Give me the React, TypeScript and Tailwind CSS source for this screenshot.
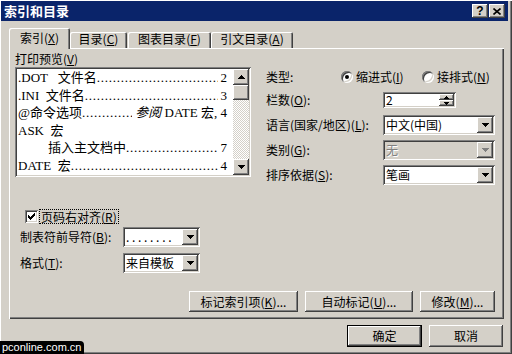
import React from "react";

const raised =
  "shadow-[inset_-1px_-1px_#404040,inset_1px_1px_#ffffff,inset_-2px_-2px_#808080,inset_2px_2px_#d4d0c8]";
const sunken =
  "shadow-[inset_1px_1px_#808080,inset_-1px_-1px_#ffffff,inset_2px_2px_#404040,inset_-2px_-2px_#d4d0c8]";

function M({ c }: { c: string }) {
  return (
    <span>
      (<span className="underline">{c}</span>)
    </span>
  );
}

function DownArrow({ color = "#000000" }: { color?: string }) {
  return (
    <svg width="7" height="4" viewBox="0 0 7 4">
      <path fill={color} d="M0 0h7v1H0zM1 1h5v1H1zM2 2h3v1H2zM3 3h1v1H3z" />
    </svg>
  );
}
function UpArrow() {
  return (
    <svg width="7" height="4" viewBox="0 0 7 4">
      <path fill="#000000" d="M3 0h1v1H3zM2 1h3v1H2zM1 2h5v1H1zM0 3h7v1H0z" />
    </svg>
  );
}
function TinyUp() {
  return (
    <svg width="5" height="3" viewBox="0 0 5 3">
      <path fill="#000000" d="M2 0h1v1H2zM1 1h3v1H1zM0 2h5v1H0z" />
    </svg>
  );
}
function TinyDown() {
  return (
    <svg width="5" height="3" viewBox="0 0 5 3">
      <path fill="#000000" d="M0 0h5v1H0zM1 1h3v1H1zM2 2h1v1H2z" />
    </svg>
  );
}

function Select({ text, w, disabled }: { text: string; w: string; disabled?: boolean }) {
  return (
    <div
      className={`flex h-[20px] items-center p-[2px] ${w} ${sunken} ${
        disabled ? "bg-[#d4d0c8]" : "bg-white"
      }`}
    >
      <span
        className={`flex-1 overflow-hidden whitespace-nowrap pl-[1px] leading-[14px] ${
          disabled ? "text-[#808080] [text-shadow:1px_1px_0_#ffffff]" : ""
        }`}
      >
        {text}
      </span>
      <span className={`flex h-[16px] w-[16px] items-center justify-center bg-[#d4d0c8] ${raised}`}>
        <DownArrow color={disabled ? "#808080" : "#000000"} />
      </span>
    </div>
  );
}

function Radio({ checked }: { checked?: boolean }) {
  return (
    <span className="flex h-[12px] w-[12px] items-center justify-center rounded-full bg-white shadow-[inset_1px_1px_#808080,inset_-1px_-1px_#ffffff,inset_2px_2px_#404040,inset_-2px_-2px_#d4d0c8]">
      {checked && <span className="h-[4px] w-[4px] rounded-full bg-black" />}
    </span>
  );
}

function Btn({ w, children, def }: { w: string; children: React.ReactNode; def?: boolean }) {
  if (def) {
    return (
      <div className={`h-[22px] ${w} border border-black`}>
        <div className={`flex h-full w-full items-center justify-center ${raised}`}>{children}</div>
      </div>
    );
  }
  return (
    <div className={`flex h-[21px] ${w} items-center justify-center ${raised}`}>{children}</div>
  );
}

const DOTS = ".".repeat(60);

function Row({
  left,
  right,
  indent,
}: {
  left: React.ReactNode;
  right?: React.ReactNode;
  indent?: boolean;
}) {
  return (
    <div className={`flex h-[17.6px] whitespace-nowrap ${indent ? "pl-[30px]" : ""}`}>
      <span>{left}</span>
      {right !== undefined && (
        <>
          <span className="min-w-0 flex-1 overflow-hidden tracking-[0.75px]">{DOTS}</span>
          <span className="pl-[3px]">{right}</span>
        </>
      )}
    </div>
  );
}

export default function App() {
  return (
    <div className="relative h-[354px] w-[512px] overflow-hidden bg-[#d4d0c8] font-['Noto_Sans_CJK_SC','Liberation_Sans',sans-serif] text-[12px] leading-[14px] text-black shadow-[inset_1px_1px_#ffffff,inset_-1px_-1px_#404040,inset_-2px_-2px_#808080]">
      {/* Title bar */}
      <div className="ml-px mr-[4px] mt-px flex h-[20px] items-center justify-between bg-[#0a246a] pl-[3px] pr-[3px]">
        <span className="text-[13px] font-bold leading-[16px] text-white">索引和目录</span>
        <div className="flex gap-px">
          <div
            className={`flex h-[14px] w-[16px] items-center justify-center bg-[#d4d0c8] font-['Liberation_Sans',sans-serif] text-[12px] font-bold leading-[12px] ${raised}`}
          >
            ?
          </div>
          <div className={`flex h-[14px] w-[16px] items-center justify-center bg-[#d4d0c8] ${raised}`}>
            <svg width="8" height="7" viewBox="0 0 8 7">
              <path d="M0.5 0.5L7.5 6.5M7.5 0.5L0.5 6.5" stroke="#000000" strokeWidth="1.6" />
            </svg>
          </div>
        </div>
      </div>

      {/* Tabs */}
      <div className="ml-[9px] mt-[7px] flex h-[20px] items-start">
        <div className="relative z-10 flex h-[21px] w-[61px] items-start justify-center rounded-t-[2px] bg-[#d4d0c8] pt-[3px] shadow-[inset_1px_1px_#ffffff,inset_-1px_0_#404040,inset_-2px_0_#808080]">
          索引<M c="X" />
        </div>
        <div className="mt-[4px] flex h-[16px] w-[57px] items-start justify-center rounded-t-[2px] shadow-[inset_1px_1px_#ffffff,inset_-1px_0_#404040,inset_-2px_0_#808080]">
          目录<M c="C" />
        </div>
        <div className="ml-px mt-[4px] flex h-[16px] w-[83px] items-start justify-center rounded-t-[2px] shadow-[inset_1px_1px_#ffffff,inset_-1px_0_#404040,inset_-2px_0_#808080]">
          图表目录<M c="F" />
        </div>
        <div className="mt-[4px] flex h-[16px] w-[82px] items-start justify-center rounded-t-[2px] shadow-[inset_1px_1px_#ffffff,inset_-1px_0_#404040,inset_-2px_0_#808080]">
          引文目录<M c="A" />
        </div>
      </div>

      {/* Panel */}
      <div className="ml-[9px] flex h-[271px] w-[495px] flex-col pt-[3px] shadow-[inset_1px_1px_#ffffff,inset_-1px_-1px_#404040,inset_-2px_-2px_#808080]">
        <div className="ml-[6px] flex h-[134px]">
          {/* Left column */}
          <div className="flex w-[236px] flex-col">
            <div className="h-[16px] leading-[16px]">
              打印预览<M c="V" />
            </div>
            <div className={`flex h-[110px] w-[236px] bg-white p-[2px] ${sunken}`}>
              <div className="min-w-0 flex-1 overflow-hidden pl-[1px] pr-[6px] font-['Liberation_Serif','Noto_Sans_CJK_SC',serif] text-[13px] leading-[17.6px]">
                <Row left={".DOT\u2002 文件名"} right="2" />
                <Row left={".INI\u2002文件名"} right="3" />
                <Row
                  left="@命令选项"
                  right={
                    <>
                      <i>参阅</i> DATE 宏, 4
                    </>
                  }
                />
                <Row left={"ASK\u2002宏"} />
                <Row left="插入主文档中" right="7" indent />
                <Row left={"DATE\u2002宏 "} right="4" />
              </div>
              <div className="flex w-[16px] flex-col">
                <div className={`flex h-[16px] w-[16px] items-center justify-center bg-[#d4d0c8] ${raised}`}>
                  <UpArrow />
                </div>
                <div className={`h-[15px] w-[16px] bg-[#d4d0c8] ${raised}`} />
                <div className="flex-1 bg-[image:repeating-conic-gradient(#d4d0c8_0_25%,#ffffff_0_50%)] bg-[size:2px_2px]" />
                <div className={`flex h-[16px] w-[16px] items-center justify-center bg-[#d4d0c8] ${raised}`}>
                  <DownArrow />
                </div>
              </div>
            </div>
          </div>

          {/* Right column */}
          <div className="ml-[15px] flex flex-col">
            <div className="mt-[18px] flex h-[16px] items-center">
              <span className="w-[75px]">类型:</span>
              <div className="flex w-[81px] items-center">
                <Radio checked />
                <span className="ml-[3px]">
                  缩进式<M c="I" />
                </span>
              </div>
              <div className="flex items-center">
                <Radio />
                <span className="ml-[3px]">
                  接排式<M c="N" />
                </span>
              </div>
            </div>
            <div className="mt-[7px] flex h-[16px] items-center">
              <span className="w-[117px]">
                栏数<M c="O" />:
              </span>
              <div className={`flex h-[16px] w-[73px] bg-white p-[2px] ${sunken}`}>
                <span className="flex-1 pl-[1px] leading-[12px]">2</span>
                <div className="flex w-[15px] flex-col">
                  <div className={`flex h-[6px] items-center justify-center bg-[#d4d0c8] ${raised}`}>
                    <TinyUp />
                  </div>
                  <div className={`flex h-[6px] items-center justify-center bg-[#d4d0c8] ${raised}`}>
                    <TinyDown />
                  </div>
                </div>
              </div>
            </div>
            <div className="mt-[7px] flex h-[20px] items-center">
              <span className="w-[117px] whitespace-nowrap">
                语言(国家/地区)<M c="L" />:
              </span>
              <Select w="w-[112px]" text="中文(中国)" />
            </div>
            <div className="mt-[5px] flex h-[20px] items-center">
              <span className="w-[117px] text-black">
                类别<M c="G" />:
              </span>
              <Select w="w-[112px]" text="无" disabled />
            </div>
            <div className="mt-[5px] flex h-[20px] items-center">
              <span className="w-[117px]">
                排序依据<M c="S" />:
              </span>
              <Select w="w-[112px]" text="笔画" />
            </div>
          </div>
        </div>

        {/* Checkbox */}
        <div className="ml-[16px] mt-[24px] flex h-[15px] items-center">
          <span className={`flex h-[13px] w-[13px] items-center justify-center bg-white ${sunken}`}>
            <svg width="7" height="7" viewBox="0 0 7 7">
              <path d="M0 2h1v3H0zM1 3h1v3H1zM2 4h1v3H2zM3 3h1v3H3zM4 2h1v3H4zM5 1h1v3H5zM6 0h1v3H6z" fill="#000000" />
            </svg>
          </span>
          <span className="ml-px border border-dotted border-black px-px leading-[13px]">
            页码右对齐<M c="R" />
          </span>
        </div>

        <div className="ml-[11px] mt-[3px] flex h-[20px] items-center">
          <span className="w-[103px]">
            制表符前导符<M c="B" />:
          </span>
          <Select w="w-[77px]" text=". . . . . . . ." />
        </div>
        <div className="ml-[11px] mt-[6px] flex h-[20px] items-center">
          <span className="w-[103px]">
            格式<M c="T" />:
          </span>
          <Select w="w-[77px]" text="来自模板" />
        </div>

        <div className="mt-[18px] flex justify-end gap-[7px] pr-[9px]">
          <Btn w="w-[109px]">
            标记索引项<M c="K" />...
          </Btn>
          <Btn w="w-[108px]">
            自动标记<M c="U" />...
          </Btn>
          <Btn w="w-[75px]">
            修改<M c="M" />...
          </Btn>
        </div>
      </div>

      {/* Bottom buttons */}
      <div className="mt-[6px] flex justify-end gap-[7px] pr-[9px]">
        <Btn w="w-[75px]" def>
          确定
        </Btn>
        <div className={`flex h-[22px] w-[74px] items-center justify-center ${raised}`}>取消</div>
      </div>

      {/* Watermark */}
      <div className="absolute bottom-0 left-0 flex h-[13px] items-center rounded-tr-[4px] bg-black px-[2px] font-['Liberation_Sans',sans-serif] text-[11px] leading-[11px] text-white">
        pconline.com.cn
      </div>
    </div>
  );
}
